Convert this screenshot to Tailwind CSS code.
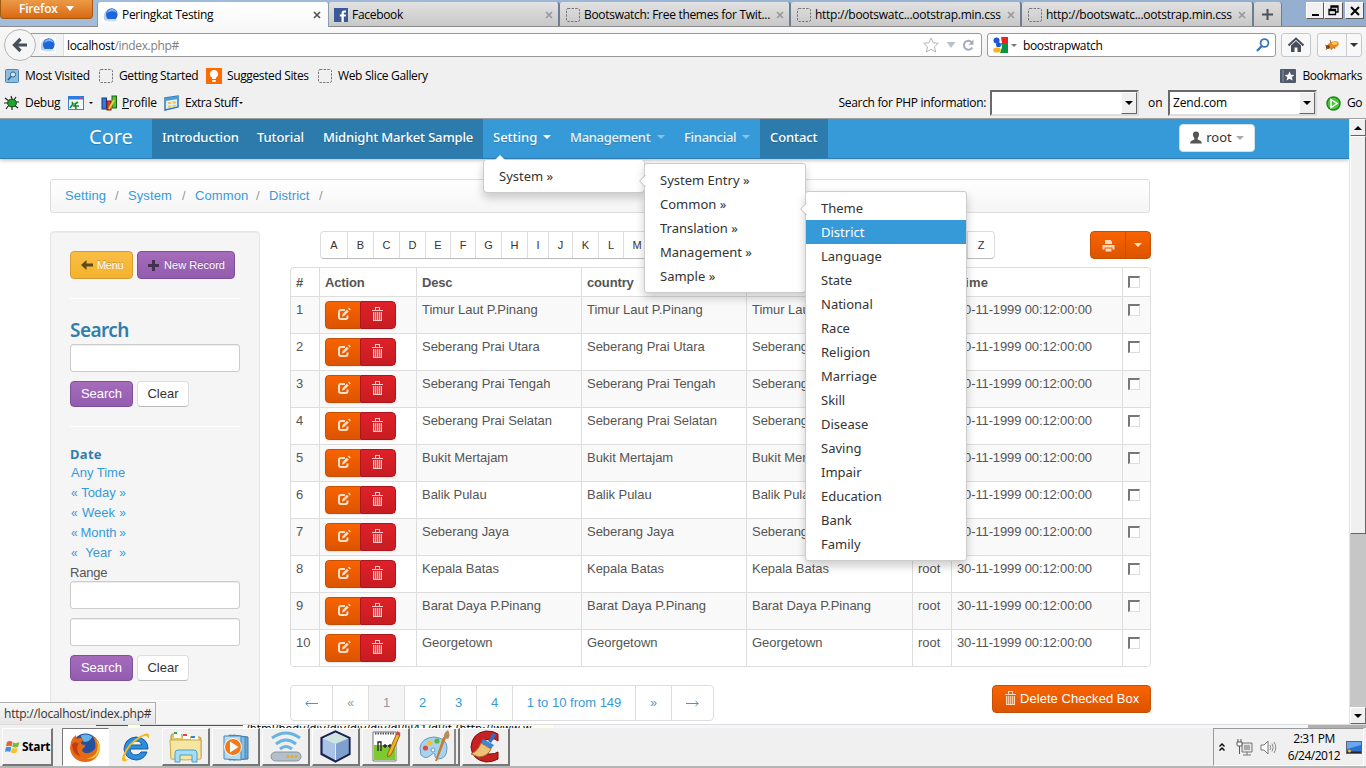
<!DOCTYPE html>
<html lang="en">
<head>
<meta charset="utf-8">
<title>Peringkat Testing</title>
<script src="https://cdn.jsdelivr.net/npm/@tailwindcss/browser@4"></script>
</head>
<body class="w-[1366px] h-[768px] overflow-hidden bg-white font-['Open_Sans','Noto_Sans',sans-serif] text-[12px] text-black">
<svg class="hidden">
  <symbol id="dash" viewBox="0 0 14 14"><rect x=".5" y=".5" width="13" height="13" rx="1.5" fill="none" stroke="#777" stroke-dasharray="2.4 1.2"/></symbol>
  <symbol id="globe" viewBox="0 0 16 16"><rect width="16" height="16" fill="#fff"/><path d="M1 12.500C0 7 2 3 7 1.500C4 5 5 10 7 14C4 14 2 14 1 12.500Z" fill="#b9cfe6"/><ellipse cx="8.800" cy="7.500" rx="5.800" ry="6.200" fill="#1e66d8"/><path d="M4 6C5 1.500 12 0 14 6C11 3.500 7 4 4 6Z" fill="#7db4f5"/><path d="M2 13C5 11.500 12 11.500 15 13C13 15 5 15 2 13Z" fill="#cfdff2"/></symbol>
  <symbol id="trash" viewBox="0 0 11 14"><path d="M0 3H11V4H0ZM3 0H8V3H7V1H4V3H3ZM1 5H2V13H9V5H10V14H1Z" fill="currentColor"/><path d="M3 5H4V13H3ZM5 5H6V13H5ZM7 5H8V13H7Z" fill="currentColor" opacity=".75"/><path d="M2 5H9V13H2Z" fill="currentColor" opacity=".3"/></symbol>
  <symbol id="edit" viewBox="0 0 14 14"><path d="M8 3H4Q2 3 2 5V10Q2 12 4 12H8.500Q10.500 12 10.500 10V8.500" fill="none" stroke="currentColor" stroke-width="2"/><path d="M5 9.800L5.600 7L9.900 2.700L11.700 4.500L7.400 8.800Z" fill="currentColor"/><path d="M11 1.600L12 .6L13.800 2.400L12.800 3.400Z" fill="currentColor"/></symbol>
  <symbol id="x" viewBox="0 0 8 8"><path d="M1 1L7 7M7 1L1 7" stroke="currentColor" stroke-width="1.700"/></symbol>
</svg>

<!-- Tab strip -->
<header class="relative h-[27px] bg-linear-to-r from-[#a3bddb] to-[#93aecf] flex border-b border-[#8b8b8b]">
  <div class="w-[93px] h-[19px] rounded-b-[4px] border border-t-0 border-[#a35a10] bg-linear-to-b from-[#ec9a45] to-[#d9690c] text-white font-semibold flex items-center pl-[18px] gap-[8px] shrink-0 pb-[1px]">
    <span class="tracking-[-.2px]">Firefox</span><i class="border-x-4 border-t-5 border-x-transparent border-t-white"></i>
  </div>
  <div class="ml-[4px] mt-[2px] h-[25px] -mb-px w-[232px] z-10 rounded-t-[3px] bg-linear-to-b from-white to-[#f8f8f8] border-x border-[#8b9bb0] flex items-center pt-[1px] pl-[5px] pr-[7px] shrink-0">
    <svg class="size-4"><use href="#globe"/></svg><span class="ml-[3px] tracking-[-.3px]">Peringkat Testing</span><svg class="size-[8px] ml-auto text-[#555]"><use href="#x"/></svg>
  </div>
  <div class="mt-[2px] h-[24px] w-[231px] rounded-t-[3px] bg-linear-to-b from-[#e2e2e2] to-[#c8c8c8] border-r-2 border-[#6b7d94] flex items-center pt-[1px] pl-[5px] pr-[5px] shrink-0">
    <svg class="size-[14px]" viewBox="0 0 14 14"><rect width="14" height="14" fill="#3b5998"/><path d="M7.500 14V8.500H5.800V6.500H7.500V5Q7.500 2.600 10 2.600H12V4.600H10.700Q9.800 4.600 9.800 5.400V6.500H12L11.700 8.500H9.800V14Z" fill="#fff"/></svg><span class="ml-[4px] tracking-[-.3px]">Facebook</span><svg class="size-[8px] ml-auto text-[#999]"><use href="#x"/></svg>
  </div>
  <div class="mt-[2px] h-[24px] w-[231px] rounded-t-[3px] bg-linear-to-b from-[#e2e2e2] to-[#c8c8c8] border-r-2 border-[#6b7d94] flex items-center pt-[1px] pl-[6px] pr-[5px] shrink-0">
    <svg class="size-[14px]"><use href="#dash"/></svg><span class="ml-[4px] whitespace-nowrap tracking-[-.3px]">Bootswatch: Free themes for Twit...</span><svg class="size-[8px] ml-auto text-[#999]"><use href="#x"/></svg>
  </div>
  <div class="mt-[2px] h-[24px] w-[231px] rounded-t-[3px] bg-linear-to-b from-[#e2e2e2] to-[#c8c8c8] border-r-2 border-[#6b7d94] flex items-center pt-[1px] pl-[6px] pr-[5px] shrink-0">
    <svg class="size-[14px]"><use href="#dash"/></svg><span class="ml-[4px] whitespace-nowrap tracking-[-.27px]">http://bootswatc...ootstrap.min.css</span><svg class="size-[8px] ml-auto text-[#999]"><use href="#x"/></svg>
  </div>
  <div class="mt-[2px] h-[24px] w-[232px] rounded-t-[3px] bg-linear-to-b from-[#e2e2e2] to-[#c8c8c8] border-r-2 border-[#6b7d94] flex items-center pt-[1px] pl-[6px] pr-[6px] shrink-0">
    <svg class="size-[14px]"><use href="#dash"/></svg><span class="ml-[4px] whitespace-nowrap tracking-[-.27px]">http://bootswatc...ootstrap.min.css</span><svg class="size-[8px] ml-auto text-[#999]"><use href="#x"/></svg>
  </div>
  <div class="mt-[2px] h-[24px] w-[28px] rounded-t-[3px] bg-linear-to-b from-[#dcdcdc] to-[#c8c8c8] border-r border-[#6b7d94] flex items-center justify-center pt-[1px] shrink-0">
    <svg class="size-[11px]"><path d="M5.500 0V11M0 5.500H11" stroke="#4a525c" stroke-width="2"/></svg>
  </div>
  <div class="ml-auto mr-[2px] mt-[2px] flex h-[17px]">
    <b class="w-[18px] bg-[#f0f0f0] border border-l-white border-t-white border-r-[#555] border-b-[#555] flex items-end justify-center"><i class="w-[7px] h-[2px] bg-black mb-[2px]"></i></b>
    <b class="w-[19px] bg-[#f0f0f0] border border-l-white border-t-white border-r-[#555] border-b-[#555] flex items-center justify-center"><svg class="size-[11px]" viewBox="0 0 11 11"><path d="M3 4V1H10V7H8M3 2H10" fill="none" stroke="#000" stroke-width="1.300"/><path d="M1 4.500H7.500V9.500H1ZM1 5.500H7.500" fill="#f0f0f0" stroke="#000" stroke-width="1.300"/></svg></b>
    <b class="ml-[2px] w-[19px] bg-[#f0f0f0] border border-l-white border-t-white border-r-[#555] border-b-[#555] flex items-center justify-center"><svg class="size-[10px]"><path d="M1 1L9 9M9 1L1 9" stroke="#000" stroke-width="2"/></svg></b>
  </div>
</header>

<!-- Browser toolbars -->
<section class="h-[92px] bg-[#f0f0f0] border-b border-[#a0a0a0]">
  <div class="h-[35px] bg-linear-to-b from-[#f8f8f8] to-[#f0f0f0] flex items-center pt-[1px]">
    <div class="ml-[4px] size-[32px] rounded-full border border-[#b5b5b5] bg-[#f6f6f6] z-10 flex items-center justify-center shrink-0">
      <svg class="size-[16px]" viewBox="0 0 16 16"><path d="M15 8H3M8.500 2L2.500 8L8.500 14" fill="none" stroke="#46505b" stroke-width="3.200"/></svg>
    </div>
    <div class="-ml-[6px] w-[952px] h-[24px] border border-[#999] rounded-r-[3px] bg-white flex items-center overflow-hidden">
      <div class="w-[33px] h-full bg-[#f3f3f3] border-r border-[#ddd] flex items-center pl-[9px]"><svg class="size-4"><use href="#globe"/></svg></div>
      <span class="ml-[3px] pt-[1px] tracking-[-.32px]">localhost<span class="text-[#808080]">/index.php#</span></span>
      <svg class="ml-auto w-[56px] h-[18px] mr-[3px]" viewBox="0 0 56 18"><path d="M9 2L11.200 6.800L16.300 7.300L12.500 10.800L13.600 16L9 13.300L4.400 16L5.500 10.800L1.700 7.300L6.800 6.800Z" fill="#fff" stroke="#b5b5b5"/><path d="M24.500 6H33.500L29 12Z" fill="#b9c1cb"/><path d="M50 6.500A4.500 4.500 0 1 0 50.300 11.500" fill="none" stroke="#a3acb8" stroke-width="2"/><path d="M51.500 3.500V8.700H46.500Z" fill="#a3acb8"/></svg>
    </div>
    <div class="ml-[5px] w-[289px] h-[24px] border border-[#999] rounded-[3px] bg-white flex items-center pl-[4px] pr-[5px]">
      <svg class="size-4" viewBox="0 0 16 16"><rect width="16" height="16" fill="#fff"/><path d="M9 0H16V6H10Z" fill="#e22"/><path d="M9 6H16V16H8L10 10Z" fill="#0b9444"/><circle cx="4.500" cy="3.500" r="3" fill="#1b57d6"/><circle cx="6.500" cy="7.800" r="2.500" fill="#1b57d6"/><ellipse cx="5" cy="13" rx="3.800" ry="2.600" fill="#f5b51b"/></svg>
      <i class="ml-[3px] border-x-3 border-t-3 border-x-transparent border-t-[#777]"></i><span class="ml-[6px] pt-[1px] tracking-[-.35px]">boostrapwatch</span>
      <svg class="ml-auto size-[14px]" viewBox="0 0 14 14"><circle cx="8.500" cy="5" r="3.900" fill="none" stroke="#3b76b5" stroke-width="1.800"/><path d="M5.800 8L1 13" stroke="#3b76b5" stroke-width="2.400"/></svg>
    </div>
    <div class="ml-[5px] w-[30px] h-[24px] border border-[#c4c8ce] rounded-[3px] bg-[#f8f8f8] flex items-center justify-center"><svg class="size-[16px]" viewBox="0 0 16 16"><path d="M.5 8.500L8 1.500L15.500 8.500" fill="none" stroke="#46505b" stroke-width="2"/><path d="M3 8.500L8 4L13 8.500V15H9.500V10.500H6.500V15H3Z" fill="#46505b"/></svg></div>
    <div class="ml-[6px] w-[45px] h-[24px] border border-[#c4c8ce] rounded-[3px] bg-[#f8f8f8] flex items-center">
      <div class="w-[29px] h-full border-r border-[#ccc] flex items-center justify-center"><svg class="size-[16px]" viewBox="0 0 16 16"><ellipse cx="9" cy="8" rx="6" ry="3.400" transform="rotate(-20 9 8)" fill="#e8861c"/><ellipse cx="10.500" cy="6.500" rx="3" ry="1.400" fill="#ffc95e"/><circle cx="3.800" cy="10" r="2" fill="#7a3d10"/><path d="M2 13L4 10M1 8L4 9.500M7 13L8 11M11 12L10 10M6 3L7 6" stroke="#7a5a3a" stroke-width=".8"/></svg></div>
      <i class="ml-[3px] border-x-4 border-t-4 border-x-transparent border-t-[#333]"></i>
    </div>
  </div>
  <div class="h-[28px] flex items-center pl-[5px] pr-[4px]">
    <svg class="size-[14px]" viewBox="0 0 14 14"><rect x=".5" y=".5" width="13" height="13" rx="1" fill="#8fbbdc" stroke="#4f86b3"/><circle cx="8" cy="5.500" r="2.600" fill="#d6e8f5" stroke="#2f6697"/><path d="M6 7.500L3 11" stroke="#2f6697" stroke-width="1.600"/></svg>
    <span class="ml-[6px] w-[74px] whitespace-nowrap tracking-[-.3px]">Most Visited</span>
    <svg class="size-[14px]"><use href="#dash"/></svg><span class="ml-[6px] w-[87px] whitespace-nowrap tracking-[-.37px]">Getting Started</span>
    <svg class="size-[16px]" viewBox="0 0 16 16"><rect width="16" height="16" fill="#ff6a00"/><path d="M8 2A4 4 0 0 0 6 9.500V11H10V9.500A4 4 0 0 0 8 2ZM6.300 12H9.700V14H6.300Z" fill="#fff"/></svg>
    <span class="ml-[5px] w-[91px] whitespace-nowrap tracking-[-.37px]">Suggested Sites</span>
    <svg class="size-[14px]"><use href="#dash"/></svg><span class="ml-[6px] whitespace-nowrap tracking-[-.35px]">Web Slice Gallery</span>
    <svg class="ml-auto size-[16px]" viewBox="0 0 16 14"><rect width="16" height="14" rx="1" fill="#4f5b6b"/><path d="M3 1V13" stroke="#8995a5"/><path d="M9.500 2.500L11 5.700L14.300 6L11.800 8.200L12.600 11.500L9.500 9.700L6.500 11.500L7.300 8.200L4.800 6L8.100 5.700Z" fill="#fff"/></svg>
    <span class="ml-[6px] tracking-[-.4px]">Bookmarks</span>
  </div>
  <div class="h-[27px] flex items-center pl-[4px] pr-[4px] pb-[1px]">
    <svg class="size-[16px]" viewBox="0 0 16 16"><path d="M1 3L5 6M0 8H5M2 14L5 10M7 1L8 4M12 2L10 5M15 7H10M14 13L10 10M8 15V11" stroke="#222" stroke-width="1.200"/><ellipse cx="8" cy="8" rx="4.300" ry="3.800" fill="#20a52a" stroke="#0b4e10"/></svg>
    <span class="ml-[5px] w-[43px] tracking-[-.3px]">Debug</span>
    <svg class="w-[16px] h-[14px]" viewBox="0 0 16 14"><rect x=".5" y=".5" width="15" height="13" fill="#f5faff" stroke="#3c7fd0"/><rect width="16" height="3.500" fill="#2f7be0"/><path d="M2 12L5 8L4 6M8 13L7 8L10 6M5 10H11" stroke="#188a2a" stroke-width="1.700" fill="none"/><rect x="12" y="1" width="2" height="2" fill="#e44"/></svg>
    <i class="ml-[5px] border-x-2 border-t-2 border-x-transparent border-t-black"></i>
    <svg class="ml-[8px] w-[17px] h-[16px]" viewBox="0 0 17 16"><rect x="1" y="3" width="4.500" height="11" fill="#3478d8" stroke="#153a80"/><rect x="6" y="6" width="4" height="9" fill="#e03a2a" stroke="#7c1a10"/><rect x="11" y="1" width="4.500" height="12" fill="#4cbf3c" stroke="#1c6614"/><path d="M8 14L13 5" stroke="#f2d22c" stroke-width="2"/></svg>
    <span class="ml-[4px] w-[42px] tracking-[-.2px]"><u>P</u>rofile</span>
    <svg class="size-[16px]" viewBox="0 0 16 16"><path d="M1 3L14 1V12L1 15Z" fill="#dff0fb" stroke="#2f78b8" stroke-width="1.500"/><path d="M1 3L14 1V4L1 6Z" fill="#4b9bd8"/><path d="M4 7H7V9H4ZM8.500 6.500H12V8.500H8.500ZM4 10.500H7V12.500H4ZM8.500 10H12V11.500H8.500Z" fill="#f0c64a"/></svg>
    <span class="ml-[5px] whitespace-nowrap tracking-[-.48px]">Extra Stuff</span><i class="ml-px border-x-2 border-t-2 border-x-transparent border-t-black"></i>
    <span class="ml-auto whitespace-nowrap tracking-[-.32px]">Search for PHP information:</span>
    <div class="ml-[4px] w-[149px] h-[26px] bg-white border-2 border-[#6a6a6a] border-r-[#ddd] border-b-[#ddd] flex justify-end"><div class="w-[16px] h-full bg-[#f0f0f0] border border-l-white border-t-white border-[#666] flex items-center justify-center"><i class="border-x-4 border-t-4 border-x-transparent border-t-black"></i></div></div>
    <span class="ml-[9px] w-[20px]">on</span>
    <div class="w-[149px] h-[26px] bg-white border-2 border-[#6a6a6a] border-r-[#ddd] border-b-[#ddd] flex items-center pl-[3px] tracking-[-.2px]">Zend.com<div class="ml-auto w-[16px] h-full bg-[#f0f0f0] border border-l-white border-t-white border-[#666] flex items-center justify-center"><i class="border-x-4 border-t-4 border-x-transparent border-t-black"></i></div></div>
    <svg class="ml-[9px] size-[15px]" viewBox="0 0 15 15"><circle cx="7.500" cy="7.500" r="6.500" fill="#4cc43c" stroke="#1c8a1a" stroke-width="1.500"/><path d="M5 3.500L11 7.500L5 11.500Z" fill="#4cc43c" stroke="#fff" stroke-width="1.500"/></svg>
    <span class="ml-[6px] tracking-[-.5px]">Go</span>
  </div>
</section>

<!-- Page viewport -->
<main class="relative h-[605px] flex overflow-hidden">
  <div class="w-[1349px] h-full overflow-hidden font-['Liberation_Sans',sans-serif] text-[13px] text-[#555] shrink-0">
    <nav class="relative z-10 h-[40px] bg-[#379ad8] border-b border-[#2f7eb3] shadow-[0_1px_4px_rgba(0,0,0,.3)] flex text-white font-['Noto_Sans',sans-serif] text-[13px] [text-shadow:0_1px_1px_rgba(0,0,0,.2)]">
      <div class="w-[152px] pl-[89px] pt-[3px] text-[20px] leading-[30px] shrink-0">Core</div>
      <div id="nav" class="flex h-[39px] leading-[36px] shrink-0 font-medium">
        <a class="w-[95px] pl-[10px] bg-[#2d7bac] tracking-[-.1px]">Introduction</a>
        <a class="w-[66px] pl-[10px] bg-[#2d7bac] tracking-[-.1px]">Tutorial</a>
        <a class="w-[170px] pl-[10px] bg-[#2d7bac] whitespace-nowrap tracking-[-.16px]">Midnight Market Sample</a>
        <a class="w-[77px] pl-[10px] pb-[3px] flex items-center">Setting<i class="ml-[6px] border-x-4 border-t-4 border-x-transparent border-t-white"></i></a>
        <a class="w-[114px] pl-[10px] pb-[3px] flex items-center text-white/90 tracking-[-.3px]">Management<i class="ml-[7px] border-x-4 border-t-4 border-x-transparent border-t-white/40"></i></a>
        <a class="w-[86px] pl-[10px] pb-[3px] flex items-center text-white/90 tracking-[-.3px]">Financial<i class="ml-[6px] border-x-4 border-t-4 border-x-transparent border-t-white/40"></i></a>
        <a class="w-[68px] pl-[10px] bg-[#2d7bac] tracking-[-.1px]">Contact</a>
      </div>
      <div class="ml-[351px] mt-[5px] w-[76px] h-[28px] rounded-[4px] bg-white border border-[#d5dde3] flex items-center justify-center text-[#333] [text-shadow:none]">
        <svg class="w-[12px] h-[13px] mr-[4px] mb-[2px]" viewBox="0 0 13 13"><path d="M6.500 0C9 0 10 1.500 9.800 3.500C9.700 5 9 6.500 8.300 7.200V8.800C10 9.600 12.800 10.300 12.800 13H.2C.2 10.300 3 9.600 4.700 8.800V7.200C4 6.500 3.300 5 3.200 3.500C3 1.500 4 0 6.500 0Z" fill="#555"/></svg>root<i class="ml-[4px] border-x-4 border-t-4 border-x-transparent border-t-[#aaa]"></i>
      </div>
    </nav>
    <div class="ml-[50px] mt-[20px] w-[1100px] h-[34px] border border-[#ddd] rounded-[3px] bg-linear-to-b from-white to-[#f5f5f5] flex items-center pl-[14px] text-[#379ad8] text-[13px] tracking-[.1px]">
      <span class="w-[50px]">Setting</span><span class="w-[13px] text-[#999]">/</span><span class="w-[54px]">System</span><span class="w-[13px] text-[#999]">/</span><span class="w-[61px]">Common</span><span class="w-[13px] text-[#999]">/</span><span class="w-[50px]">District</span><span class="text-[#999]">/</span>
    </div>
    <div class="ml-[50px] mt-[18px] flex">
      <aside class="w-[210px] h-[520px] border border-[#e6e6e6] rounded-[4px] bg-[#f5f5f5] shadow-[inset_0_1px_1px_rgba(0,0,0,.05)] px-[19px] pt-[19px] shrink-0">
        <div class="flex gap-[4px] text-[11px] text-white [text-shadow:0_-1px_0_rgba(0,0,0,.25)]">
          <div class="w-[63px] h-[28px] rounded-[4px] border border-[#d59c33] bg-linear-to-b from-[#fabe45] to-[#f4b22c] flex items-center pl-[10px]"><svg class="w-[12px] h-[10px] mr-[4px] shrink-0" viewBox="0 0 12 10"><path d="M5.500 0V3.500H12V6.500H5.500V10L0 5Z" fill="#5d4a1c"/></svg><span class="tracking-[-.3px]">Menu</span></div>
          <div class="w-[98px] h-[28px] rounded-[4px] border border-[#7e4f9a] bg-linear-to-b from-[#a46cbb] to-[#945cae] flex items-center pl-[10px] whitespace-nowrap"><svg class="size-[11px] mr-[5px]"><path d="M5.500 0V11M0 5.500H11" stroke="#443050" stroke-width="3"/></svg><span class="tracking-[.05px]">New Record</span></div>
        </div>
        <div class="mt-[18px] h-[2px] border-b border-white"></div>
        <h3 class="mt-[17px] h-[28px] leading-[28px] text-[19px] font-semibold text-[#317eac] font-['Noto_Sans',sans-serif] tracking-[-.55px]">Search</h3>
        <div class="h-[28px] border border-[#ccc] rounded-[3px] bg-white shadow-[inset_0_1px_1px_rgba(0,0,0,.075)]"></div>
        <div class="mt-[9px] flex gap-[4px] text-[13px]"><div class="w-[63px] h-[26px] rounded-[4px] border border-[#7e4f9a] bg-linear-to-b from-[#a46cbb] to-[#945cae] text-white flex items-center justify-center">Search</div><div class="w-[52px] h-[26px] rounded-[4px] border border-[#ddd] border-b-[#bbb] bg-white text-[#333] flex items-center justify-center">Clear</div></div>
        <div class="mt-[18px] h-[2px] border-b border-white"></div>
        <h4 class="mt-[17px] h-[20px] leading-[20px] text-[13px] font-bold text-[#317eac] font-['Noto_Sans',sans-serif] tracking-[.3px]">Date</h4>
        <div class="text-[13px] leading-[20px] text-[#379ad8]">
          <p class="h-[20px] leading-[18px] pl-px">Any Time</p>
          <p class="h-[20px] leading-[18px] flex w-[55px] ml-px justify-between"><i class="not-italic text-[12px]">«</i>Today<i class="not-italic text-[12px]">»</i></p>
          <p class="h-[20px] leading-[18px] flex w-[55px] ml-px justify-between"><i class="not-italic text-[12px]">«</i>Week<i class="not-italic text-[12px]">»</i></p>
          <p class="h-[20px] leading-[18px] flex w-[55px] ml-px justify-between"><i class="not-italic text-[12px]">«</i>Month<i class="not-italic text-[12px]">»</i></p>
          <p class="h-[20px] leading-[18px] flex w-[55px] ml-px justify-between"><i class="not-italic text-[12px]">«</i>Year<i class="not-italic text-[12px]">»</i></p>
          <p class="h-[17px] leading-[17px] text-[#555] tracking-[-.2px]">Range</p>
        </div>
        <div class="h-[28px] border border-[#ccc] rounded-[3px] bg-white shadow-[inset_0_1px_1px_rgba(0,0,0,.075)]"></div>
        <div class="mt-[9px] h-[28px] border border-[#ccc] rounded-[3px] bg-white shadow-[inset_0_1px_1px_rgba(0,0,0,.075)]"></div>
        <div class="mt-[9px] flex gap-[4px] text-[13px]"><div class="w-[63px] h-[26px] rounded-[4px] border border-[#7e4f9a] bg-linear-to-b from-[#a46cbb] to-[#945cae] text-white flex items-center justify-center">Search</div><div class="w-[52px] h-[26px] rounded-[4px] border border-[#ddd] border-b-[#bbb] bg-white text-[#333] flex items-center justify-center">Clear</div></div>
        <div class="mt-[18px] h-[2px] border-b border-white"></div>
      </aside>
      <section class="ml-[30px] w-[861px] shrink-0">
        <div class="flex h-[36px]">
          <div id="letters" class="ml-[30px] w-[675px] h-[28px] border border-[#ddd] border-b-[#bbb] rounded-[4px] bg-white flex text-[11px] text-[#333] leading-[27px] text-center overflow-hidden"></div>
          <div class="ml-[95px] w-[61px] h-[28px] rounded-[4px] border border-[#c45004] bg-linear-to-b from-[#f96300] to-[#dc5400] flex items-center">
            <div class="w-[35px] h-full border-r border-[#c45004] flex items-center justify-center"><svg class="size-[13px]" viewBox="0 0 13 13"><path d="M3 5V1H8.500L10 2.500V5Z" fill="#ffd9bd"/><path d="M.5 6H12.500V10.500H10.500V8.500H2.500V10.500H.5Z" fill="#ffd9bd"/><path d="M3.500 9.500H9.500V12.500H3.500Z" fill="#ffd9bd"/></svg></div>
            <i class="ml-[8px] border-x-4 border-t-4 border-x-transparent border-t-[#ffe0c8]"></i>
          </div>
        </div>
        <div id="table" class="border border-[#ddd] rounded-[4px] overflow-hidden h-[400px]">
          <div class="flex h-[28px] leading-[29px] font-bold text-[#555]">
            <span class="w-[29px] pl-[5px] border-r border-[#ddd]">#</span><span class="w-[97px] pl-[5px] border-r border-[#ddd] tracking-[-.15px]">Action</span><span class="w-[165px] pl-[5px] border-r border-[#ddd] tracking-[-.2px]">Desc</span><span class="w-[165px] pl-[5px] border-r border-[#ddd] tracking-[-.15px]">country</span><span class="w-[166px] border-r border-[#ddd]"></span><span class="w-[39px] border-r border-[#ddd]"></span><span class="w-[171px] pl-[5px] border-r border-[#ddd] tracking-[.3px]">Time</span><span class="pl-[5px] pt-[8px]"><i class="block size-[12px] bg-white border-2 border-[#777] border-r border-b border-r-[#ddd] border-b-[#ddd]"></i></span>
          </div>
        </div>
        <div class="mt-[18px] flex justify-between">
          <div class="h-[36px] border border-[#ddd] rounded-[4px] flex leading-[34px] text-center text-[#379ad8] text-[13px] overflow-hidden">
            <a class="w-[42px] border-r border-[#ddd] flex items-center justify-center"><svg class="w-[13px] h-[7px]" viewBox="0 0 13 7"><path d="M13 3.500H1M3.500 .8L.8 3.500L3.500 6.200" fill="none" stroke="#379ad8"/></svg></a><a class="w-[36px] border-r border-[#ddd] text-[#999] text-[12px]">«</a><a class="w-[36px] border-r border-[#ddd] text-[#999] bg-[#f5f5f5]">1</a><a class="w-[36px] border-r border-[#ddd]">2</a><a class="w-[36px] border-r border-[#ddd]">3</a><a class="w-[36px] border-r border-[#ddd]">4</a><a class="w-[123px] border-r border-[#ddd]">1 to 10 from 149</a><a class="w-[36px] border-r border-[#ddd] text-[12px]">»</a><a class="w-[41px] flex items-center justify-center"><svg class="w-[13px] h-[7px]" viewBox="0 0 13 7"><path d="M0 3.500H12M9.500 .8L12.200 3.500L9.500 6.200" fill="none" stroke="#379ad8"/></svg></a>
          </div>
          <div class="w-[159px] h-[28px] rounded-[4px] border border-[#c45004] bg-linear-to-b from-[#f96300] to-[#dc5400] flex items-center pl-[12px] text-white text-[13px] whitespace-nowrap"><svg class="w-[11px] h-[14px] mr-[4px] mb-[2px] text-[#ffd9bd]"><use href="#trash"/></svg><span class="tracking-[.05px]">Delete Checked Box</span></div>
        </div>
      </section>
    </div>
  </div>

  <!-- Scrollbar -->
  <div class="w-[17px] h-full bg-[#c6c6c6] border-l border-[#e3e3e3] flex flex-col shrink-0">
    <div class="h-[17px] bg-[#f0f0f0] border border-l-white border-t-white border-[#666] flex items-center justify-center"><i class="border-x-4 border-b-4 border-x-transparent border-b-black"></i></div>
    <div class="h-[398px] bg-[#f0f0f0] border border-l-white border-t-white border-[#666]"></div>
    <div class="mt-auto h-[17px] bg-[#f0f0f0] border border-l-white border-t-white border-[#666] flex items-center justify-center"><i class="border-x-4 border-t-4 border-x-transparent border-t-black"></i></div>
  </div>

  <!-- Open menus, over the page -->
  <div id="menus" class="font-['Noto_Sans',sans-serif] text-[13px] text-[#333]">
    <div class="absolute z-20 left-[483px] top-[40px] w-[162px] h-[34px] bg-white border border-[#ccc] rounded-[4px] shadow-[0_5px_10px_rgba(0,0,0,.2)] pt-[4px] pl-[15px] leading-[24px]">System »
      <svg class="absolute left-[10px] -top-[6px] w-[12px] h-[7px]"><path d="M0 7L6 1L12 7Z" fill="#fff"/></svg>
    </div>
    <div class="absolute z-30 left-[644px] top-[44px] w-[162px] h-[130px] bg-white border border-[#ccc] rounded-[3px] shadow-[0_5px_10px_rgba(0,0,0,.2)] pt-[4px] pl-[15px] leading-[24px]">
      <p>System Entry »</p><p>Common »</p><p>Translation »</p><p>Management »</p><p>Sample »</p>
      <svg class="absolute -left-[6px] top-[11px] w-[7px] h-[12px]"><path d="M7 0L1 6L7 12Z" fill="#fff"/><path d="M6.500 0L.7 6L6.500 12" fill="none" stroke="#bbb"/></svg>
    </div>
    <div id="sub" class="absolute z-40 left-[805px] top-[72px] w-[162px] h-[370px] bg-white border border-[#ccc] rounded-[3px] shadow-[0_5px_10px_rgba(0,0,0,.2)] pt-[4px] leading-[24px]">
      <svg class="absolute -left-[6px] top-[11px] w-[7px] h-[12px]"><path d="M7 0L1 6L7 12Z" fill="#fff"/><path d="M6.500 0L.7 6L6.500 12" fill="none" stroke="#bbb"/></svg>
      <p class="pl-[15px]">Theme</p><p class="pl-[15px] bg-[#379ad8] text-white">District</p><p class="pl-[15px]">Language</p><p class="pl-[15px]">State</p><p class="pl-[15px]">National</p><p class="pl-[15px]">Race</p><p class="pl-[15px]">Religion</p><p class="pl-[15px]">Marriage</p><p class="pl-[15px]">Skill</p><p class="pl-[15px]">Disease</p><p class="pl-[15px]">Saving</p><p class="pl-[15px]">Impair</p><p class="pl-[15px]">Education</p><p class="pl-[15px]">Bank</p><p class="pl-[15px]">Family</p>
    </div>
    <div class="absolute z-20 left-0 bottom-0 w-[156px] h-[22px] bg-linear-to-b from-[#f8f8f8] to-[#e6e6e6] border-t border-r border-[#b0b0b0] pl-[4px] leading-[21px] text-[12px] font-['Open_Sans',sans-serif] tracking-[-.23px] whitespace-nowrap">http://localhost/index.php#</div>
  </div>
</main>

<!-- Taskbar -->
<footer class="h-[44px] flex flex-col">
  <div class="h-[4px] bg-[#f3f7fb] flex overflow-hidden border-t border-[#ddd]">
    <i class="w-[96px] bg-[#f0f0f0] shrink-0"></i><i class="w-[32px] bg-[#f0f0f0] border-t border-[#555] shrink-0"></i><i class="w-[12px] bg-[#ffffdd] shrink-0"></i><i class="w-[103px] bg-[#f0f0f0] border-t border-[#555] shrink-0"></i>
    <span class="w-[310px] h-[4px] whitespace-nowrap overflow-hidden bg-[#fffff0] leading-[8px] pl-[3px] font-['DejaVu_Sans',sans-serif] text-[11px]">/html/body/div/div/div/div/dl/lil41/dl/if (http://www.w</span>
    <i class="ml-auto w-[58px] bg-[#b0b0b0] shrink-0"></i>
  </div>
  <div class="h-[40px] bg-[#f0f0f0] border-b-2 border-[#b5b5b5] flex">
    <div class="ml-[2px] w-[51px] h-[38px] border border-white border-r-2 border-b-2 border-r-[#777] border-b-[#777] flex items-center pl-[2px] font-bold text-[12px] gap-[2px] tracking-[-.3px]">
      <svg class="w-[15px] h-[14px] shrink-0" viewBox="0 0 15 14"><path d="M2 2Q5 0 7.500 2L6.500 6.500Q4 5 1 6.500Z" fill="#e8602c"/><path d="M8.200 2.500Q11 4 14.500 2L13 7Q10 8 7.200 6.800Z" fill="#7ab83c"/><path d="M.8 7.500Q4 6 6.300 7.500L5.200 12Q2.500 10.500 0 12Z" fill="#3f8fe0"/><path d="M7 8Q10 9 12.800 8L11.500 12.500Q8.500 14 5.900 12.500Z" fill="#f6c12c"/></svg>Start</div>
    <div class="ml-[9px] w-[47px] h-[38px] bg-white border border-[#777] border-r-white border-b-white flex items-center justify-center">
      <svg class="size-[33px]" viewBox="0 0 34 34"><circle cx="17" cy="16" r="13.500" fill="#24509e"/><path d="M12 5Q18 2 24 6Q21 12 15 11Z" fill="#62b5ea"/><path d="M2 11Q4 6 7 4L8 8Q13 6 15 9L12 12Q14 15 17 14L16 17Q13 18 14 21Q20 26 27 18Q28 11 24 5Q32 9 32 18Q30 31 17 32Q3 31 1 18Z" fill="#e56a17"/><path d="M27 8Q31 13 29 20Q26 28 18 28Q28 31 32 19Q32 12 27 8Z" fill="#fcc32c"/><path d="M3 14Q6 10 10 13Q6 20 12 26Q4 25 3 14Z" fill="#c43d12"/></svg></div>
    <div class="w-[50px] h-[38px] flex items-center justify-center pl-[4px]">
      <svg class="size-[32px]" viewBox="0 0 32 32"><path d="M24.500 18H10Q10.500 24 16 24Q19.500 24 21 21H27Q24 29 16 29Q5 28 4 18Q5 7 16 6Q28 7 28 18ZM10.500 14H21.500Q21 10 16 10Q11.500 10 10.500 14Z" fill="#2c8ede" stroke="#145a9e"/><path d="M6 30Q0 32 3 24Q8 11 22 4Q30 0 29 6L28 8Q28 3 22 6Q8 14 5 25Q4 30 9 28Z" fill="#f5b91e"/></svg></div>
    <div class="ml-[3px] w-[48px] h-[38px] border border-white border-r-2 border-b-2 border-r-[#777] border-b-[#777] flex items-center justify-center">
      <svg class="size-[33px]" viewBox="0 0 33 33"><path d="M2 6Q2 4 4 4H12L14 7H30Q32 7 32 9V27H2Z" fill="#e8c768" stroke="#b89438"/><path d="M5 2H12V8H5ZM14 4H21V9H14ZM22 6H29V10H22Z" fill="#fff"/><path d="M5 2H8V4H5Z" fill="#39a83a"/><path d="M14 4H18V6H14Z" fill="#e34b2b"/><path d="M22 6H26V8H22Z" fill="#2f85dc"/><path d="M1 10H32V29Q16 31 2 29Z" fill="#f7e6a2" stroke="#c9a950"/><path d="M6 32V23Q6 20 9 20H25Q28 20 28 23V32H23V25H11V32Z" fill="#a6dcf4" stroke="#4d9fcb"/></svg></div>
    <div class="ml-[2px] w-[48px] h-[38px] border border-white border-r-2 border-b-2 border-r-[#777] border-b-[#777] flex items-center justify-center">
      <svg class="size-[30px]" viewBox="0 0 30 30"><path d="M12 3L27 5V27L12 28Z" fill="#6da7cf" stroke="#3a7aac"/><path d="M8 3L24 5V27L8 28Z" fill="#8ac0e2" stroke="#4685b4"/><path d="M3 4H20V28L3 27Z" fill="#b7dcf2" stroke="#4685b4"/><circle cx="12" cy="15" r="8.500" fill="#f27a18" stroke="#fff"/><path d="M9 9.500L17.500 15L9 20.500Z" fill="#fff"/></svg></div>
    <div class="ml-[2px] w-[48px] h-[38px] border border-white border-r-2 border-b-2 border-r-[#777] border-b-[#777] flex items-center justify-center">
      <svg class="size-[32px]" viewBox="0 0 32 32"><path d="M2 7Q16 -3 30 7M6 13Q16 5 26 13M10 18Q16 13 22 18" fill="none" stroke="#6ab4e0" stroke-width="3"/><rect x="1" y="21" width="30" height="9" rx="4.500" fill="#b3bfc9" stroke="#8796a3"/><circle cx="18" cy="25.500" r="1.300" fill="#f5a800"/><circle cx="22" cy="25.500" r="1.300" fill="#f5a800"/><circle cx="26" cy="25.500" r="1.300" fill="#f5a800"/></svg></div>
    <div class="ml-[2px] w-[48px] h-[38px] border border-white border-r-2 border-b-2 border-r-[#777] border-b-[#777] flex items-center justify-center">
      <svg class="size-[33px]" viewBox="0 0 33 33"><path d="M16.500 1.500L30.500 8V24L16.500 31.500L2.500 24V8Z" fill="#a9c3e6" stroke="#1c2350" stroke-width="2.200"/><path d="M16.500 2.500L29.500 8.500L16.500 14L3.500 8.500Z" fill="#cfe4de"/><path d="M16.500 14L29.500 8.500V23.500L16.500 30.500Z" fill="#7f9fce"/><path d="M16.500 14V30" stroke="#e3edf9"/></svg></div>
    <div class="ml-[2px] w-[48px] h-[38px] border border-white border-r-2 border-b-2 border-r-[#777] border-b-[#777] flex items-center justify-center">
      <svg class="size-[33px]" viewBox="0 0 33 33"><path d="M4 2H27V31H4Z" fill="#fff" stroke="#777"/><path d="M5 15H26V30H5Z" fill="#7ccb2e"/><path d="M6 3.500H26" stroke="#555" stroke-width="2" stroke-dasharray="1.500 1"/><path d="M9 21V12H12V21M14 16H18M16 14V18M19 16H23M21 14V18" fill="none" stroke="#222" stroke-width="1.300"/><path d="M28 3L31 5L22 25L18.500 27L19 23Z" fill="#f2b32c" stroke="#9a6410"/><path d="M28 1L31.500 3L30.500 6L27 4Z" fill="#d3434b"/></svg></div>
    <div class="ml-[2px] w-[48px] h-[38px] border border-white border-r-2 border-b-2 border-r-[#777] border-b-[#777] flex items-center justify-center pr-[3px] shadow-[inset_-2px_0_0_#f0f0f0,inset_-4px_0_0_#888]">
      <svg class="size-[33px]" viewBox="0 0 33 33"><path d="M2 18Q3 8 16 7Q29 8 29 18Q29 29 20 29Q16 28 17 24Q16 22 13 25Q8 30 3 25Z" fill="#a9d2ec" stroke="#5f9cc4"/><circle cx="7.500" cy="18" r="2.600" fill="#e24b3b"/><circle cx="12" cy="13" r="2.600" fill="#f4c22e"/><circle cx="19" cy="11" r="2.600" fill="#58b845"/><circle cx="15" cy="20" r="2" fill="#f0f5fa" stroke="#5f9cc4"/><path d="M28 8L19 31L17 31L25 7Z" fill="#c97a34"/><path d="M26 8Q25 3 30 0Q33 5 30 9Z" fill="#b98a62"/></svg></div>
    <div class="ml-[2px] w-[48px] h-[38px] border border-white border-r-2 border-b-2 border-r-[#777] border-b-[#777] flex items-center justify-center">
      <svg class="size-[33px]" viewBox="0 0 33 33"><path d="M29 11Q26 8 21 9Q12 10 12 17Q13 24 21 24Q26 24 29 22V29Q24 32 17 32Q3 30 2 17Q3 3 17 1Q25 1 29 4Z" fill="#c52322" stroke="#7c100f"/><path d="M24 3L27 5L22 13L19 11Z" fill="#2f6fc0"/><path d="M14 9L25 15L22 19L12 13Z" fill="#3b86d6"/><path d="M12 13L22 19Q19 26 10 27L2 24Q9 21 12 13Z" fill="#efc079" stroke="#a9752f"/></svg></div>
    <div class="ml-auto mr-[2px] w-[151px] h-[38px] border border-[#999] border-r-white border-b-white flex items-center pl-[4px]">
      <svg class="w-[8px] h-[10px]" viewBox="0 0 8 10"><path d="M1.500 4.500L4 2L6.500 4.500M1.500 8.500L4 6L6.500 8.500" fill="none" stroke="#000" stroke-width="1.400"/></svg>
      <svg class="ml-[10px] size-[17px]" viewBox="0 0 17 17"><path d="M6 4H16V13H6Z" fill="#e5e5e5" stroke="#777"/><path d="M8 6H14V11H8Z" fill="#aaa"/><path d="M7 16H15M11 13V16" stroke="#777"/><path d="M1 3V6Q1 7 2 7H5Q6 7 6 6V3ZM2 0V3M5 0V3M3.500 7V15" stroke="#555" fill="#fff"/></svg>
      <svg class="ml-[7px] size-[17px]" viewBox="0 0 17 17"><path d="M1 6H4L8 2V15L4 11H1Z" fill="#fff" stroke="#777"/><path d="M10 6Q11.500 8.500 10 11M12 4.500Q14.500 8.500 12 12.500M14 3Q17.500 8.500 14 14" fill="none" stroke="#888"/></svg>
      <div class="ml-[7px] w-[60px] text-center text-[12px] leading-[17px] tracking-[-.5px]"><p>2:31 PM</p><p>6/24/2012</p></div>
      <svg class="ml-[2px] w-[16px] h-[13px]" viewBox="0 0 16 13"><rect x=".5" y=".5" width="15" height="12" fill="#2b6fd0" stroke="#567"/><path d="M1 1H15V4L1 8Z" fill="#69a7ee"/><path d="M1 10.500H15V12H1Z" fill="#223"/><circle cx="3.500" cy="10" r="1.500" fill="#f4c02c"/></svg>
    </div>
  </div>
</footer>

<script>
const widths = [27,26,26,26,25,25,26,26,21,24,26,25,27,26,27,26,27,26,26,25,26,26,29,27,26,26];
document.getElementById('letters').innerHTML = [...'ABCDEFGHIJKLMNOPQRSTUVWXYZ'].map((c, i) =>
  `<a class="border-r border-[#ddd] shrink-0 last:border-r-0" style="width:${widths[i]}px">${c}</a>`).join('');
const names = ['Timur Laut P.Pinang','Seberang Prai Utara','Seberang Prai Tengah','Seberang Prai Selatan','Bukit Mertajam','Balik Pulau','Seberang Jaya','Kepala Batas','Barat Daya P.Pinang','Georgetown'];
const name = n => `<span class="w-[165px] pl-[5px] border-r border-[#ddd] shrink-0">${n}</span>`;
document.getElementById('table').insertAdjacentHTML('beforeend', names.map((n, i) => `
  <div class="flex h-[37px] border-t border-[#ddd] leading-[25px] odd:bg-white even:bg-[#f9f9f9] whitespace-nowrap tracking-[-.04px]">
    <span class="w-[29px] pl-[5px] border-r border-[#ddd] shrink-0">${i + 1}</span>
    <span class="w-[97px] pl-[5px] pt-[4px] border-r border-[#ddd] shrink-0"><span class="flex w-[71px] h-[28px] rounded-[4px] overflow-hidden shadow-[0_1px_2px_rgba(0,0,0,.1)]">
      <b class="w-[35px] bg-linear-to-b from-[#f96300] to-[#dc5400] border border-r-0 border-[#c45004] rounded-l-[4px] flex items-center justify-center text-[#ffe0c8]"><svg class="size-[14px] ml-[2px] mb-[2px]"><use href="#edit"/></svg></b>
      <b class="w-[36px] bg-linear-to-b from-[#df2128] to-[#c71c22] border border-[#a8181d] rounded-r-[4px] flex items-start justify-center pt-[5px] text-[#f7c9cb]"><svg class="w-[11px] h-[14px] mr-px"><use href="#trash"/></svg></b></span></span>
    ${name(n)}${name(n)}<span class="w-[166px] pl-[5px] border-r border-[#ddd] shrink-0">${n}</span>
    <span class="w-[39px] pl-[5px] border-r border-[#ddd] shrink-0">root</span>
    <span class="w-[171px] pl-[5px] border-r border-[#ddd] shrink-0 tracking-[-.13px]">30-11-1999 00:12:00:00</span>
    <span class="pl-[5px] pt-[7px]"><i class="block size-[12px] bg-white border-2 border-[#777] border-r border-b border-r-[#ddd] border-b-[#ddd]"></i></span>
  </div>`).join(''));
</script>
</body>
</html>
